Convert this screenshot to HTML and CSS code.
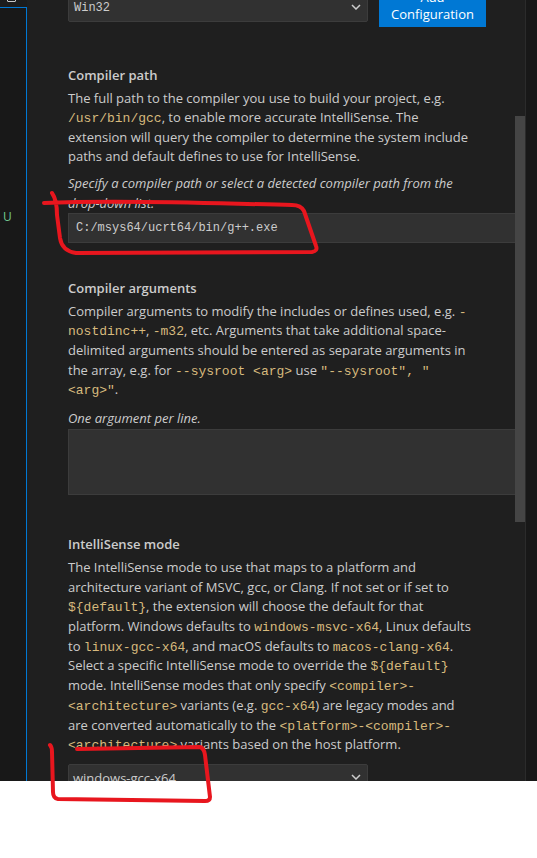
FILE: index.html
```html
<!DOCTYPE html>
<html lang="en">
<head>
<meta charset="utf-8">
<title>C/C++ Configurations</title>
<link rel="stylesheet" href="styles.css">
</head>
<body>
<div class="window">
  <div class="explorer">
    <div class="explorer-top"><span class="checkbox"></span></div>
    <div class="tree"><span class="git-u">U</span></div>
  </div>
  <main class="panel">
    <div class="config-row">
      <div class="select select-top">
        <span class="mono sel-text">Win32</span>
        <svg class="chev" width="10" height="6" viewBox="0 0 10 6"><polyline points="1,1 5,5 9,1" fill="none" stroke="#cccccc" stroke-width="1.5"/></svg>
      </div>
      <button class="btn">Add Configuration</button>
    </div>

    <section class="setting s-path">
      <h3 class="title">Compiler path</h3>
      <p class="desc d-path">The full path to the compiler you use to build your project, e.g.<br><code>/usr/bin/gcc</code>, to enable more accurate IntelliSense. The<br>extension will query the compiler to determine the system include<br>paths and default defines to use for IntelliSense.</p>
      <p class="hint h-path">Specify a compiler path or select a detected compiler path from the<br>drop-down list.</p>
      <div class="input mono">C:/msys64/ucrt64/bin/g++.exe</div>
    </section>

    <section class="setting s-args">
      <h3 class="title">Compiler arguments</h3>
      <p class="desc d-args">Compiler arguments to modify the includes or defines used, e.g. <code>-</code><br><code>nostdinc++</code>, <code>-m32</code>, etc. Arguments that take additional space-<br>delimited arguments should be entered as separate arguments in<br>the array, e.g. for <code>--sysroot &lt;arg&gt;</code> use <code>"--sysroot", "</code><br><code>&lt;arg&gt;"</code>.</p>
      <p class="hint h-args">One argument per line.</p>
      <div class="textarea"></div>
    </section>

    <section class="setting s-mode">
      <h3 class="title">IntelliSense mode</h3>
      <p class="desc d-mode">The IntelliSense mode to use that maps to a platform and<br>architecture variant of MSVC, gcc, or Clang. If not set or if set to<br><code>${default}</code>, the extension will choose the default for that<br>platform. Windows defaults to <code>windows-msvc-x64</code>, Linux defaults<br>to <code>linux-gcc-x64</code>, and macOS defaults to <code>macos-clang-x64</code>.<br>Select a specific IntelliSense mode to override the <code>${default}</code><br>mode. IntelliSense modes that only specify <code>&lt;compiler&gt;-</code><br><code>&lt;architecture&gt;</code> variants (e.g. <code>gcc-x64</code>) are legacy modes and<br>are converted automatically to the <code>&lt;platform&gt;-&lt;compiler&gt;-</code><br><code>&lt;architecture&gt;</code> variants based on the host platform.</p>
      <div class="select select-mode">
        <span class="sel-text">windows-gcc-x64</span>
        <svg class="chev" width="10" height="6" viewBox="0 0 10 6"><polyline points="1,1 5,5 9,1" fill="none" stroke="#cccccc" stroke-width="1.5"/></svg>
      </div>
    </section>

    <div class="scroll-thumb"></div>
  </main>
  <div class="edge"></div>
  <div class="right-strip"></div>
</div>

<svg class="ink" width="537" height="858" viewBox="0 0 537 858">
  <path d="M52,193 Q57,200 57,215 L60,238 Q62,251 76,253 L312,252 Q318,251 316,246 L304,211 Q301,205 292,205 C230,204 130,199 44,203" fill="none" stroke="#e8161e" stroke-width="4" stroke-linecap="round" stroke-linejoin="round"/>
  <path d="M77,749 L200,747 Q204,748 205,755 L210,797 Q210,801 205,801 L58,799 Q53,798 53,792 L52,752 Q52,747 50,745" fill="none" stroke="#e8161e" stroke-width="4" stroke-linecap="round" stroke-linejoin="round"/>
</svg>
</body>
</html>
```

FILE: styles.css
```css
* { box-sizing: border-box; }

html, body {
  margin: 0;
  padding: 0;
}

body {
  position: relative;
  width: 537px;
  height: 858px;
  overflow: hidden;
  background: #ffffff;
  font-family: "Open Sans", "Noto Sans", sans-serif;
  font-size: 13px;
  color: #cccccc;
}

.window {
  display: flex;
  height: 781px;
  overflow: hidden;
  background: #1f1f1f;
}

/* left explorer strip */
.explorer {
  width: 27px;
  flex: none;
  display: flex;
  flex-direction: column;
}

.explorer-top {
  height: 7px;
  background: #1c1c1c;
  overflow: hidden;
  padding-left: 7px;
}

.checkbox {
  display: block;
  width: 9px;
  height: 9px;
  margin-top: -7px;
  border: 1px solid #c8c8c8;
  border-radius: 1px;
}

.tree {
  flex: 1;
  background: #181818;
  border-top: 1px solid #0078d4;
  border-right: 1px solid #0078d4;
  padding: 199px 0 0 3px;
}

.git-u {
  display: block;
  color: #73c991;
  font-size: 12px;
  line-height: 20px;
}

/* main settings panel */
.panel {
  position: relative;
  width: 498px;
  flex: none;
  overflow: hidden;
  padding-left: 41px;
  background: #1f1f1f;
}

.edge {
  width: 1px;
  flex: none;
  background: #2b2b2b;
}

.right-strip {
  flex: 1;
  background: #181818;
}

.scroll-thumb {
  position: absolute;
  right: 0;
  top: 116px;
  width: 10px;
  height: 406px;
  background: #454545;
}

.mono {
  font-family: "Liberation Mono", "DejaVu Sans Mono", monospace;
}

.config-row {
  display: flex;
  align-items: flex-start;
  gap: 11px;
  margin-top: -15px;
}

.select {
  display: flex;
  align-items: center;
  justify-content: space-between;
  width: 300px;
  height: 28px;
  padding: 0 6px 0 4px;
  background: #313131;
  border: 1px solid #3c3c3c;
  border-radius: 2px;
  color: #cccccc;
}

.select-top {
  margin-top: 9px;
  font-size: 12px;
}

.select-top .sel-text {
  padding-left: 1px;
}

.chev {
  display: block;
  margin-top: -2px;
}

.btn {
  width: 107px;
  padding: 4px 8px;
  border: none;
  border-radius: 0;
  background: #0078d4;
  color: #ffffff;
  font-family: "Open Sans", "Noto Sans", sans-serif;
  font-size: 13px;
  line-height: 17px;
  text-align: center;
}

.setting {
  display: flex;
  flex-direction: column;
}

.s-path { margin-top: 39px; }
.s-args { margin-top: 36px; }
.s-mode { margin-top: 40px; }

.title {
  margin: 0 0 3px;
  font-size: 13px;
  font-weight: 600;
  line-height: 19.6px;
  color: #cccccc;
}

.desc {
  margin: 0;
  width: 440px;
  line-height: 19.6px;
  color: #cccccc;
}

.d-path { margin-bottom: 7px; }
.d-args { margin-bottom: 9px; }
.d-mode { margin-bottom: 9px; line-height: 19.7px; }

code {
  font-family: "Liberation Mono", "DejaVu Sans Mono", monospace;
  font-size: 13px;
  line-height: 1;
  color: #d7ba7d;
}

.hint {
  margin: 0;
  font-style: italic;
  line-height: 19.6px;
  color: #cccccc;
}

.h-path { margin-bottom: 0; }
.h-args { margin-bottom: 1px; }

.input {
  height: 30px;
  display: flex;
  align-items: center;
  padding-left: 7px;
  background: #313131;
  border: 1px solid #3c3c3c;
  font-size: 12px;
  color: #cccccc;
}

.textarea {
  height: 66px;
  background: #313131;
  border: 1px solid #3c3c3c;
}

.select-mode {
  font-size: 13px;
}

/* hand-drawn annotations over the screenshot */
.ink {
  position: absolute;
  left: 0;
  top: 0;
  pointer-events: none;
}
```
